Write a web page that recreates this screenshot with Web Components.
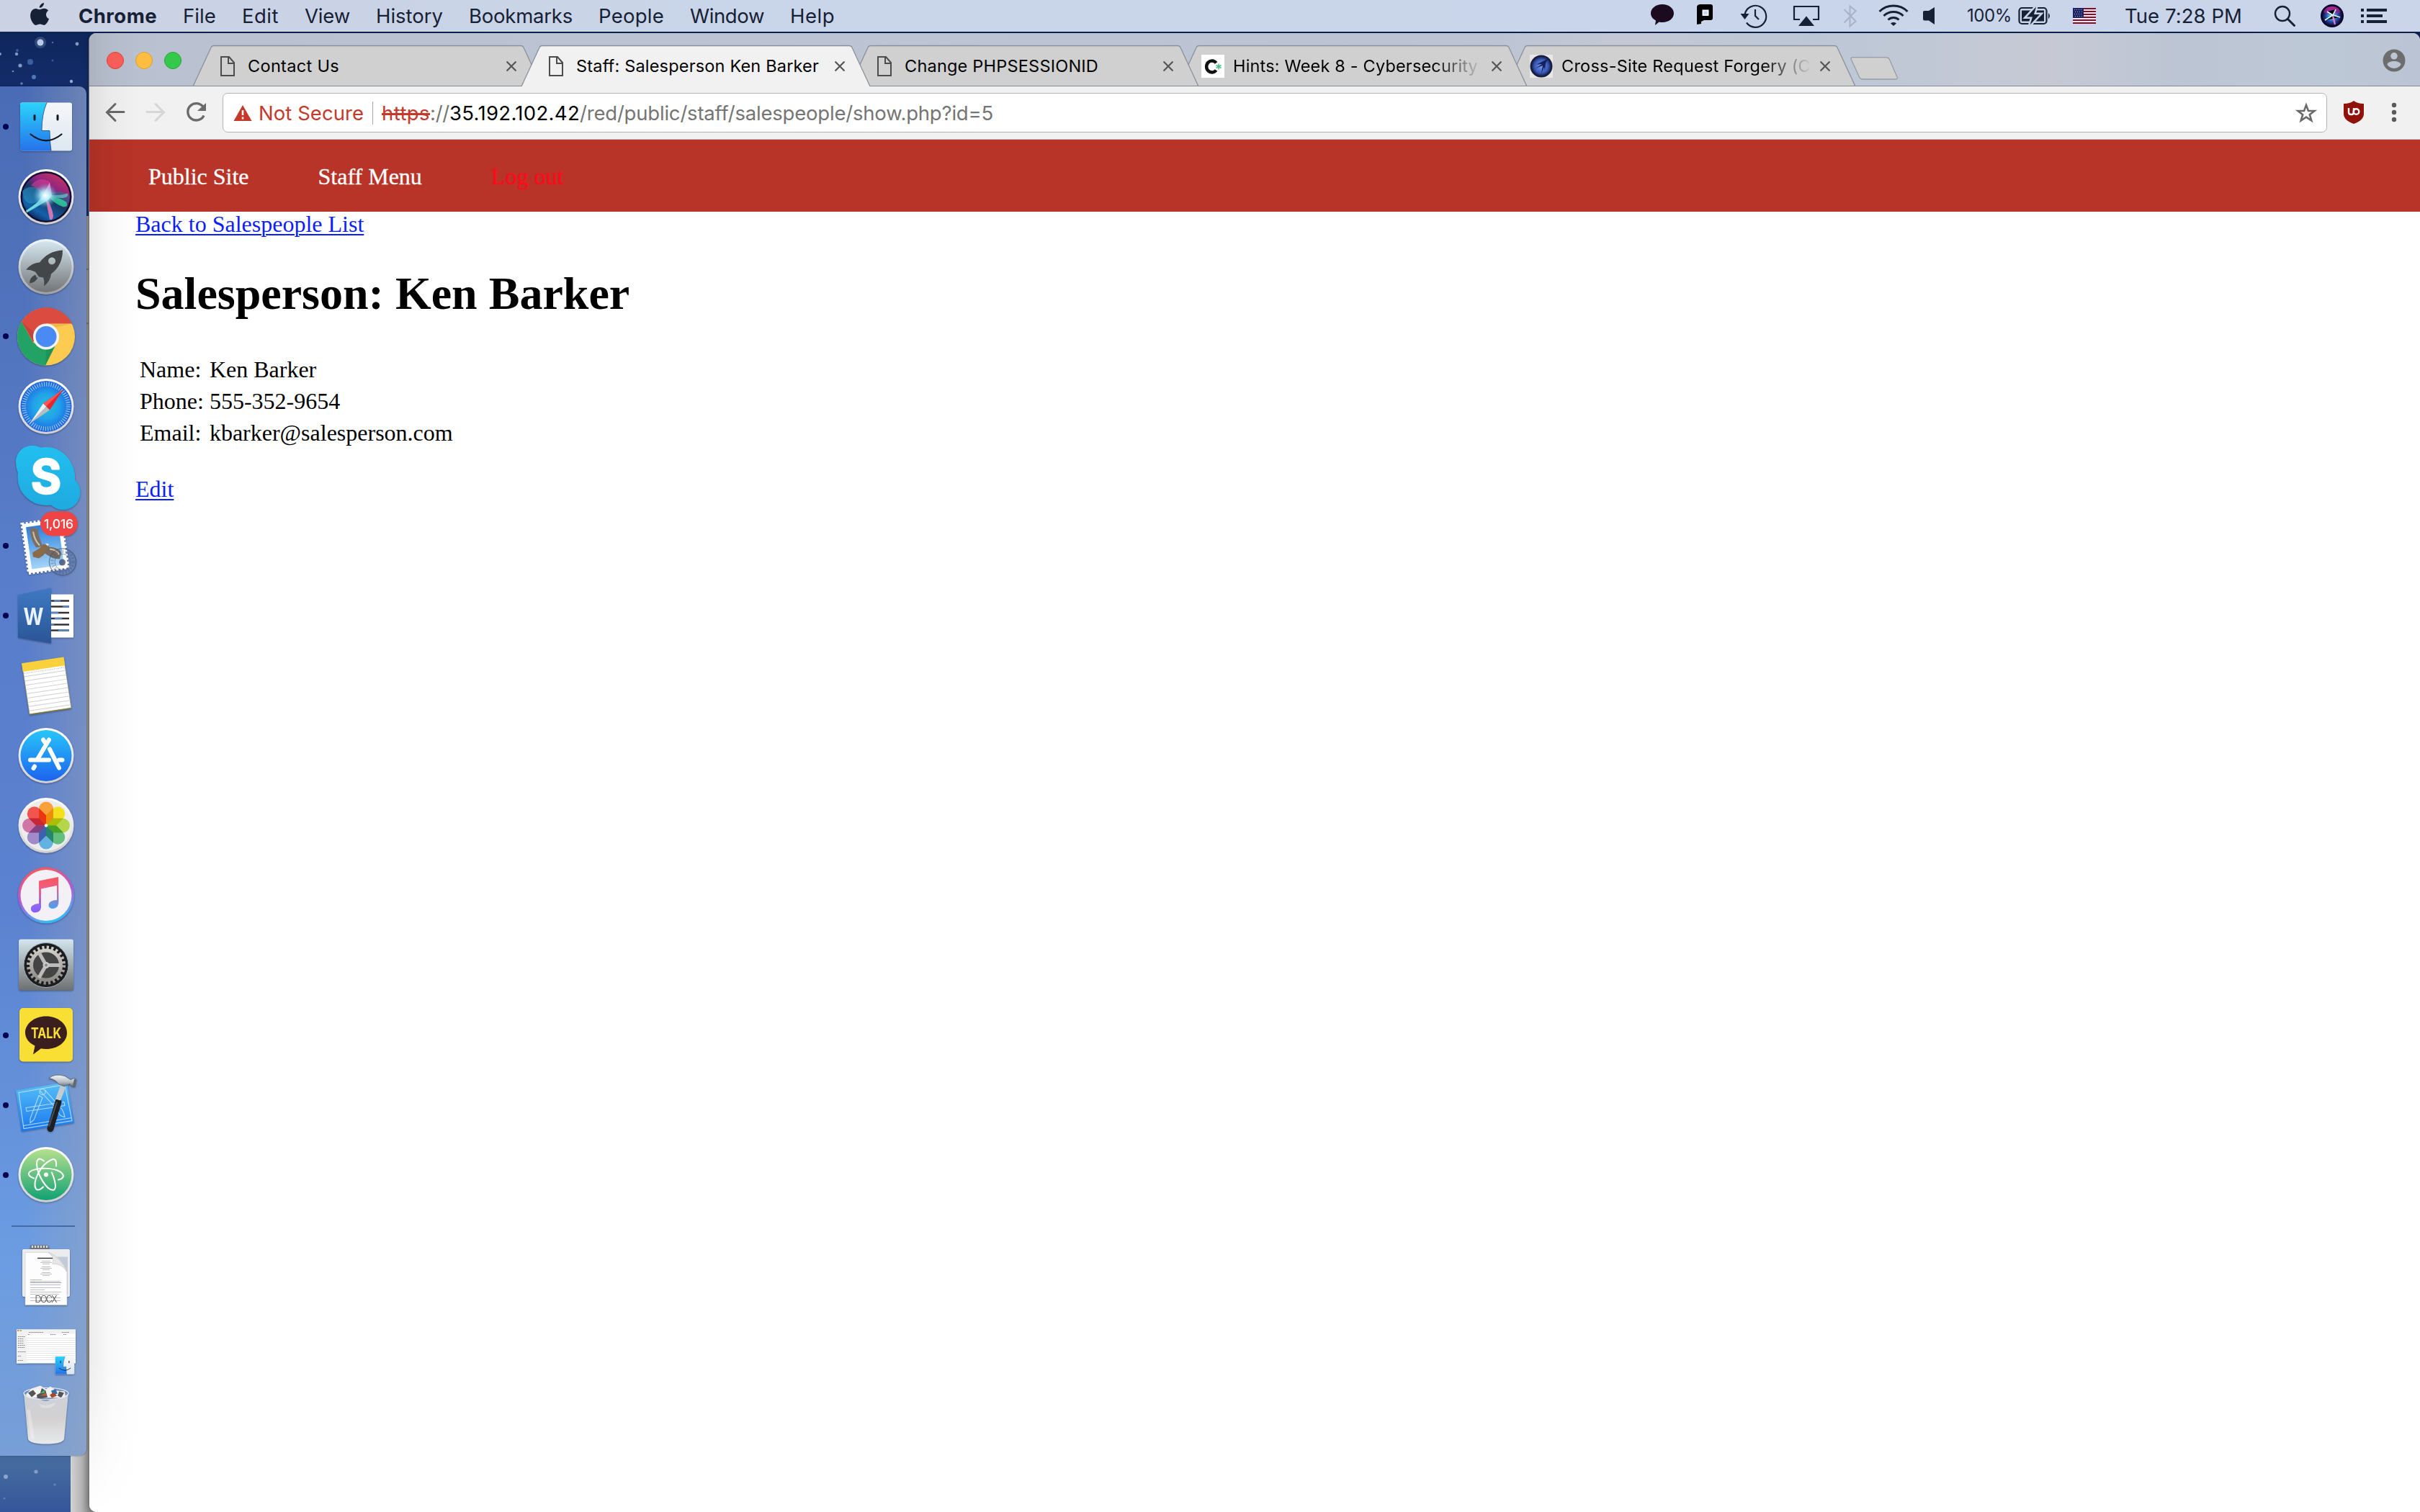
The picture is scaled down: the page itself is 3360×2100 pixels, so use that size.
<!DOCTYPE html>
<html lang="en">
<head>
<meta charset="utf-8">
<title>Staff: Salesperson Ken Barker</title>
<style>
html,body{margin:0;padding:0;width:3360px;height:2100px;overflow:hidden;background:#0e2450}
</style>
</head>
<body>
<desktop-screen></desktop-screen>

<template id="t-desktop">
<style>
:host{display:block;position:relative;width:3360px;height:2100px;overflow:hidden;font-family:Inter,"Liberation Sans",sans-serif}
.wall,.behind,browser-window,mac-dock{position:absolute}
.wall{left:0;top:0}
.behind{left:98px;top:300px;width:200px;height:1800px;background:linear-gradient(90deg,#d2d2d2 0,#b8b8b8 14px,#8c8c8c 26px)}
.behind i{display:block;height:73px;border-bottom:2px solid #777}
browser-window{left:124px;top:46px}
mac-dock{left:0;top:120px}
mac-menubar{position:relative}
</style>
<svg class="wall" width="3360" height="2100" viewBox="0 0 3360 2100">
<defs><linearGradient id="sky" x2="0" y2="1"><stop offset="0" stop-color="#0b2150"/><stop offset=".05" stop-color="#132c69"/><stop offset=".9" stop-color="#36578f"/><stop offset=".97" stop-color="#456a9f"/><stop offset="1" stop-color="#35569a"/></linearGradient></defs>
<rect width="3360" height="2100" fill="url(#sky)"/>
<g fill="#b9cbe6"><circle cx="56" cy="59" r="8" opacity=".2"/><circle cx="56" cy="59" r="4.5"/><circle cx="107" cy="61" r="2.4" opacity=".7"/><circle cx="23" cy="75" r="2.2" opacity=".7"/><circle cx="28" cy="91" r="2.6" opacity=".7"/><circle cx="99" cy="113" r="2.2" opacity=".8"/><circle cx="0" cy="75" r="2" opacity=".7"/><circle cx="18" cy="99" r="1.3" opacity=".6"/><circle cx="30" cy="116" r="1.8" opacity=".5"/><circle cx="73" cy="59" r="1.3" opacity=".4"/></g>
<g fill="#5e8bd0"><circle cx="42" cy="86" r="4" opacity=".55"/><circle cx="47" cy="107" r="3" opacity=".8"/><circle cx="24" cy="70" r="2" opacity=".5"/><circle cx="73" cy="84" r="1.5" opacity=".5"/></g>
<g fill="#9db6d8"><circle cx="8" cy="2051" r="3" opacity=".8"/><circle cx="50" cy="2044" r="2.6" opacity=".7"/><circle cx="76" cy="2062" r="1.8" opacity=".4"/><circle cx="6" cy="2081" r="1.5" opacity=".4"/></g>
</svg>
<div class="behind"><i></i><i></i></div>
<browser-window></browser-window>
<mac-dock></mac-dock>
<mac-menubar></mac-menubar>
</template>

<template id="t-menubar">
<style>
:host{display:flex;justify-content:space-between;height:44px;width:3360px;background:linear-gradient(90deg,#cbd2e4,#c9d5e8 30%,#c9d5ea 70%,#cbd5ea);color:#172135;font-size:27.5px;line-height:44px}
nav,.st{display:flex;align-items:center}
nav{padding-left:41px;gap:36px}
nav b{font-weight:700}
nav svg{margin-right:4px}
.st{padding-right:46px}
svg{display:block;overflow:visible;flex:none}
</style>
<nav>
<svg width="28" height="44" viewBox="41 0 28 44"><path fill="#172135" d="M61 4c.3 3-2.700 7-6.200 6.800C54.500 8 57.700 4.400 61 4zM55 13.200c1.500 0 3.500-1.400 6.500-1.400 2.300.1 4.200 1 5.600 3-4.600 3-3.900 9.400.9 11.300-.9 3.300-3.900 8.700-6.700 8.800-2 0-3-1.300-5.800-1.300s-3.800 1.300-5.600 1.300c-3.300 0-7.800-7.200-7.800-13.200 0-6 3.500-9.700 7.500-9.800 2.300 0 3.900 1.300 5.400 1.300z"/></svg>
<b><fit-text w="109">Chrome</fit-text></b><fit-text w="46">File</fit-text><fit-text w="51">Edit</fit-text><fit-text w="63">View</fit-text><fit-text w="93">History</fit-text><fit-text w="144">Bookmarks</fit-text><fit-text w="91">People</fit-text><fit-text w="103">Window</fit-text><fit-text w="62">Help</fit-text>
</nav>
<div class="st">
<svg width="500" height="44" viewBox="2230 0 500 44">
<path fill="#1c0a1e" d="M2308 6c9 0 16 5.500 16 12.500S2317 31 2308 31c-1.600 0-3-.1-4.500-.5L2298 35l1-6.500c-4.300-2.200-7-5.800-7-10C2292 11.500 2299 6 2308 6z"/>
<path fill="#000" fill-rule="evenodd" d="M2361 6h14q3 0 3 3v16q0 3-3 3h-9l-4 2v3l-6 1V9q1-3 5-3zm3 8v7h8v-7z"/><path stroke="#f4f6fb" stroke-width="2" fill="#c9d5ea" d="M2364.500 14.500h7v6.500h-7z"/>
<g fill="none" stroke="#172135" stroke-width="2.200"><path d="M2422.500 20A15 15 0 1 1 2425 31.500"/><path d="M2437 13v9l5 5"/></g><path fill="#172135" d="M2416.500 19h12l-6 8z"/>
<path fill="none" stroke="#172135" stroke-width="2.200" d="M2499 27h-8V9h34v18h-8"/><path fill="#172135" d="M2508 22.500l11 13.500h-22z"/>
<path fill="none" stroke="#a9b4cc" stroke-width="2.200" d="M2560.500 13l16 16.500-8 7V8.500l8 6.500-16 16.500"/>
<g fill="none" stroke="#172135" stroke-width="3"><path d="M2609.500 16a28 28 0 0 1 39 0M2615.500 22a19.500 19.500 0 0 1 27 0M2621.500 27.500a11 11 0 0 1 15 0"/></g><path fill="#172135" d="M2625 32.500q4-2.800 8 0l-4 3.500z"/>
<path fill="#172135" d="M2672 15h6l8-5v24l-8-5.500h-6q-2 0-2-2V17q0-2 2-2z"/>
</svg>
<fit-text w="63" style="font-size:24px;text-indent:1px">100%</fit-text>
<svg width="157" height="44" viewBox="2793 0 157 44">
<rect x="2803.500" y="11" width="38" height="22" rx="4" fill="none" stroke="#172135" stroke-width="2.200"/><rect x="2807" y="14.500" width="31" height="15" fill="#172135"/>
<path fill="#172135" d="M2844 18q4 4 0 8.500z"/><path fill="#172135" stroke="#c9d5ea" stroke-width="5" paint-order="stroke" d="M2827 9.500l-13 14h8l-3.500 11 13.500-14.500h-8z"/>
<g><path fill="#f0eef2" d="M2878 11h32v22h-32z"/><path stroke="#8d0a26" stroke-width="2" d="M2878 12h32M2878 16h32M2878 20h32M2878 24h32M2878 28h32M2878 32h32"/><path fill="#1d2367" d="M2878 11h15v14h-15z"/><path stroke="#aab" stroke-width="1" stroke-dasharray="1 2" d="M2880 13.500h11M2881 16.500h10M2880 19.500h11M2881 22.500h10"/></g>
</svg>
<fit-text w="163">Tue 7:28 PM</fit-text>
<svg width="201" height="44" viewBox="3113 0 201 44">
<defs><radialGradient id="sir"><stop offset="0" stop-color="#eaffff"/><stop offset=".25" stop-color="#4ec3e0"/><stop offset=".6" stop-color="#2a4fb0"/><stop offset="1" stop-color="#100b3a"/></radialGradient><linearGradient id="sip" x2="0" y2="1"><stop offset="0" stop-color="#c31f9a"/><stop offset="1" stop-color="#c31f9a" stop-opacity=".2"/></linearGradient></defs>
<g fill="none" stroke="#172135" stroke-width="2.400"><circle cx="3169" cy="19" r="10"/><path d="M3176.500 26.500l9 9" stroke-width="3" stroke-linecap="round"/></g>
<circle cx="3238" cy="22" r="16" fill="#0a0828"/><circle cx="3238" cy="22" r="13.500" fill="url(#sir)"/><path fill="url(#sip)" d="M3226 17a13 13 0 0 1 24 0l-12 5z"/><path stroke="#d9fbff" stroke-width="1.600" d="M3228 28l11-7 10 3M3231 16l8 5 4-8"/><path stroke="#e77fd0" stroke-width="2.200" d="M3239 22l3 12"/>
<path fill="#172135" d="M3278 12h4v4h-4zm8 0h28v4h-28zM3278 20h4v4h-4zm8 0h22v4h-22zM3278 28h4v4h-4zm8 0h28v4h-28z"/>
</svg>
</div>
</template>

<template id="t-tab">
<style>
:host{display:grid;grid-template:57px/484px;width:484px;height:57px;margin-left:-28px;flex:none;--bg:#d0d0d0}
:host([active]){--bg:#f1f1f1}
.bg,.row{grid-area:1/1}
.bg{display:block;overflow:visible}
.line{display:inline}
:host([active]) .line{display:none}
.row{display:grid;grid-template-columns:32px 349px 14px;column-gap:12px;padding-left:32px;align-items:center;box-sizing:border-box;height:57px}
.ic{display:flex;justify-content:center;padding-top:1px}
.tx{overflow:hidden;white-space:nowrap;font-size:23.500px;line-height:30px;color:#000}
:host([fade]) .tx{-webkit-mask-image:linear-gradient(90deg,#000 calc(100% - 72px),transparent calc(100% - 2px));mask-image:linear-gradient(90deg,#000 calc(100% - 72px),transparent calc(100% - 2px))}
.x{margin-left:-2px}
svg{display:block}
</style>
<svg class="bg" width="484" height="57" viewBox="0 0 484 57"><path fill="var(--bg)" d="M0 57L25 3Q26 .5 29 .5H455Q458 .5 459 3L484 57z"/><path fill="none" stroke="#8b919b" stroke-width="1.300" d="M0 57L25 3Q26 .5 29 .5H455Q458 .5 459 3L484 57"/><path class="line" stroke="#858b96" d="M0 56.500H484"/></svg>
<div class="row"><div class="ic"><slot name="icon"><svg width="20" height="28" viewBox="0 0 20 28"><path fill="none" stroke="#4c4c4c" stroke-width="2" d="M1 1h11l7 8v18H1zM11 1v9h8"/></svg></slot></div><div class="tx"><slot></slot></div>
<svg class="x" width="14" height="14" viewBox="0 0 14 14"><path stroke="#555" stroke-width="2.200" d="M.5.5l13 13m0-13l-13 13"/></svg></div>
</template>

<template id="t-window">
<style>
:host{display:flex;flex-direction:column;width:3236px;height:2054px;box-sizing:border-box;background:#fff;border-radius:10px 10px 0 10px;overflow:hidden;box-shadow:-1px 0 0 #6f7075,0 0 10px rgba(0,0,0,.35)}
.strip{display:flex;height:73px;border-bottom:1px solid #858b96;background:linear-gradient(90deg,#b9c0cf,#bdc4d3 35%,#bcc4d4 60%,#c4c8d4 66%,#bcc7d6 74%,#c6c9d4 84%,#bcc5d4 90%,#bdc8d6 96%,#bbc4d4);justify-content:space-between}
.left{display:flex}
.lights{display:flex;gap:16px;padding:26px 0 0 24px;width:148px}
.lights i{width:22px;height:22px;border-radius:50%;border:1px solid #e0443e;background:#fc605b}
.lights i:nth-child(2){background:#fdbd41;border-color:#dfa02f}
.lights i:nth-child(3){background:#34c94a;border-color:#24a837}
.tabs{display:flex;padding-top:17px;isolation:isolate}
.tabs chrome-tab{position:relative}
.plus{margin:33px 0 0 -7px}
.prof{margin:22px 20px 0 0}
svg{display:block;flex:none}
.bar{display:flex;height:73px;border-bottom:1px solid #c4bfc2;background:#f1f1f1;align-items:flex-start}
.nav{margin:18px 0 0 18px}
.omni{display:flex;width:2920px;height:53px;margin:9px 0 0 20px;border:1px solid #b3b3b3;border-radius:7px;background:#fff;align-items:center;font-size:27.500px;line-height:54px;color:#757575;white-space:nowrap}
.omni .ns{color:#c5392d;margin-left:9px}
.omni .dv{width:1px;height:32px;background:#a9a9a9;margin:0 12px 0 12px}
.omni .https{color:#c5392d;text-decoration:line-through;text-decoration-thickness:3px}
.omni b{font-weight:400;color:#000}
.omni .star{margin-left:auto;margin-right:13px}
.shade{position:absolute;left:0;top:0;width:80px;height:2054px;background:linear-gradient(90deg,rgba(0,0,0,.07),rgba(0,0,0,.025) 30px,rgba(0,0,0,0) 70px);-webkit-mask-image:linear-gradient(#000 90%,transparent);mask-image:linear-gradient(#000 90%,transparent)}
</style>
<div class="strip">
<div class="left">
<div class="lights"><i></i><i></i><i></i></div>
<div class="tabs">
<chrome-tab style="z-index:4"><fit-text w="127">Contact Us</fit-text></chrome-tab>
<chrome-tab active style="z-index:9"><fit-text w="337">Staff: Salesperson Ken Barker</fit-text></chrome-tab>
<chrome-tab style="z-index:3"><fit-text w="269">Change PHPSESSIONID</fit-text></chrome-tab>
<chrome-tab fade style="z-index:2"><svg slot="icon" width="32" height="32" viewBox="0 0 32 32"><path fill="#fff" d="M0 0h32v32H0z"/><path fill="none" stroke="#111" stroke-width="4.500" d="M20.500 11.500a7.500 8 0 1 0 0 10"/><path stroke="#4cc08c" stroke-width="1.600" d="M24 12.500v8M20.500 14.500l7 4M27.500 14.500l-7 4"/></svg><fit-text w="340">Hints: Week 8 - Cybersecurity</fit-text></chrome-tab>
<chrome-tab fade style="z-index:1"><svg slot="icon" width="32" height="32" viewBox="0 0 32 32"><defs><radialGradient id="ow"><stop offset="0" stop-color="#7d9bea"/><stop offset=".7" stop-color="#3555b4"/><stop offset="1" stop-color="#10183c"/></radialGradient></defs><path fill="#e8e8e8" d="M0 0h32v32H0z"/><circle cx="16" cy="16" r="15.500" fill="#1a2038"/><circle cx="16" cy="16" r="14" fill="url(#ow)"/><path fill="#13225f" d="M25 6L9 13.500l8-.5-9 6 10-4-2 11 4-9 1 5 1-10z"/></svg><fit-text w="346">Cross-Site Request Forgery (C</fit-text></chrome-tab>
</div>
<svg class="plus" width="66" height="32" viewBox="0 0 66 32"><path fill="#d0d0d0" stroke="#989ca4" stroke-width="1.300" d="M3 .7H50q3 0 4.500 3L65 28q1 3-2 3H17q-3 0-4.500-3L1.200 3.500Q.5.700 3 .7z"/></svg>
</div>
<svg class="prof" width="32" height="32" viewBox="0 0 32 32"><path fill="#6d6d6d" fill-rule="evenodd" d="M16 .5a15.500 15.500 0 1 1 0 31a15.500 15.500 0 0 1 0-31zm0 4.500a4.800 4.800 0 1 0 0 9.600a4.800 4.800 0 0 0 0-9.600zm0 12c-4.500 0-9.500 1.800-9.500 4.700 2 3.300 5.700 5.200 9.500 5.200s7.500-1.900 9.500-5.200c0-2.900-5-4.700-9.500-4.700z"/></svg>
</div>
<div class="bar">
<svg class="nav" width="147" height="36" viewBox="142 138 147 36"><g fill="none" stroke-width="3"><path stroke="#6a6a6a" stroke-linecap="round" d="M160 144.500L148.500 156l11.500 11.500M149 155.500h23"/><path stroke="#d6d6d6" stroke-linecap="round" d="M216 144.500l11.500 11.500-11.500 11.500M227 155.500h-23"/><path stroke="#6a6a6a" stroke-width="3.400" d="M282 148.500a11.700 11.700 0 1 0 1 12"/></g><path fill="#6a6a6a" d="M286 143v11h-12z"/></svg>
<div class="omni">
<svg width="26" height="24" viewBox="0 0 26 24" style="margin-left:14px"><path fill="#c5392d" d="M13 1l12.500 22H.5z"/><path stroke="#fff" stroke-width="2.600" d="M13 8v7M13 17.500v3"/></svg>
<span class="ns"><fit-text w="146">Not Secure</fit-text></span><span class="dv"></span>
<fit-text class="https" w="67">https</fit-text><fit-text w="27">://</fit-text><b><fit-text w="181">35.192.102.42</fit-text></b><fit-text w="574">/red/public/staff/salespeople/show.php?id=5</fit-text>
<svg class="star" width="30" height="30" viewBox="0 0 30 30"><path fill="none" stroke="#6a6a6a" stroke-width="2.600" d="M15 4l3 8h8.500l-6.700 5.200 2.500 8.300L15 20.600 7.700 25.500l2.500-8.300L3.500 12H12z"/></svg>
</div>
<svg style="margin:18px 0 0 22px" width="84" height="36" viewBox="3253 138 84 36"><path fill="#8f130b" d="M3268 140q5 4 14 4v14q0 9-14 14q-14-5-14-14v-14q9 0 14-4z"/><g fill="none" stroke="#fff" stroke-width="2.400"><path d="M3261 150v6q0 3 3.500 3t3.500-3v-6"/><circle cx="3271.500" cy="155" r="3.800"/></g><g fill="#5a5a5a"><circle cx="3324" cy="146" r="3.200"/><circle cx="3324" cy="156" r="3.200"/><circle cx="3324" cy="166" r="3.200"/></g></svg>
</div>
<staff-page></staff-page>
<div class="shade"></div>
</template>

<template id="t-page">
<style>
:host{display:block;flex:1;background:#fff;font-family:"Liberation Serif","Times New Roman",serif;font-size:32px;line-height:36px;color:#000}
nav{display:flex;height:100px;background:#b83328;color:#fff;gap:96px;padding:1px 0 0 82px;align-items:center;box-sizing:border-box;-webkit-text-stroke:.3px}
nav .out{color:#ff0a1a}
main{padding-left:64px;margin-top:-1px}
a{display:table;color:#0a1eff;text-decoration:underline;text-decoration-thickness:2px;text-underline-offset:3px;text-decoration-skip-ink:auto}
h1{font-size:64px;line-height:74px;margin:42px 0 44px}
table{border-spacing:4px;margin-bottom:36px}
td{padding:2px}
</style>
<nav><span>Public Site</span><span>Staff Menu</span><span class="out">Log out</span></nav>
<main><a>Back to Salespeople List</a><h1>Salesperson: Ken Barker</h1>
<table><tr><td>Name:</td><td>Ken Barker</td></tr><tr><td>Phone:</td><td>555-352-9654</td></tr><tr><td>Email:</td><td>kbarker@salesperson.com</td></tr></table>
<a>Edit</a></main>
</template>

<template id="t-dockitem">
<style>
:host{display:grid;grid-template-columns:12px 108px;height:97.070px;align-items:center;flex:none}
i{width:8px;height:8px;border-radius:50%;margin-left:4px;visibility:hidden;background:#02024f}
:host([running]) i{visibility:visible}
</style><i></i><slot></slot>
</template>

<template id="t-dock">
<style>
:host{display:flex;flex-direction:column;width:120px;height:1902px;box-sizing:border-box;padding-top:7.500px;border-radius:0 10px 10px 0;background:linear-gradient(90deg,rgba(160,160,170,0) 30%,rgba(165,168,180,.38)),linear-gradient(#4a6cb6,#4f71ba 12%,#587dca 35%,#5b82d0 60%,#6b9ce2 85%,#779ed6);box-shadow:0 0 2px rgba(0,0,0,.5)}
.sep{height:2px;margin:21.500px 16px 18.500px;width:88px;background:#456ba6;flex:none}
svg{display:block;overflow:visible}
svg.big{filter:drop-shadow(0 1px 1px rgba(0,0,0,.35))}
text{font-family:Inter,"Liberation Sans",sans-serif}
</style>
<svg width="0" height="0" style="position:absolute"><defs>
<linearGradient id="fb" x2="0" y2="1"><stop offset="0" stop-color="#2ad3fb"/><stop offset="1" stop-color="#2673ec"/></linearGradient>
<linearGradient id="fw" x2="0" y2="1"><stop offset="0" stop-color="#f6f6f8"/><stop offset="1" stop-color="#dbe7f2"/></linearGradient>
<linearGradient id="lp" x2="0" y2="1"><stop offset="0" stop-color="#d5e6ef"/><stop offset="1" stop-color="#737577"/></linearGradient>
<linearGradient id="rim" x2="0" y2="1"><stop offset="0" stop-color="#fff"/><stop offset="1" stop-color="#cfcfd1"/></linearGradient>
<linearGradient id="lrim" x2="0" y2="1"><stop offset="0" stop-color="#eef8ff"/><stop offset="1" stop-color="#a0a1a4"/></linearGradient>
<radialGradient id="sf"><stop offset="0" stop-color="#22c0d8"/><stop offset=".5" stop-color="#22a2ea"/><stop offset="1" stop-color="#1c63e0"/></radialGradient>
<linearGradient id="sk" x2="0" y2="1"><stop offset="0" stop-color="#22bff0"/><stop offset="1" stop-color="#1fa9df"/></linearGradient>
<linearGradient id="ml" x2="0" y2="1"><stop offset="0" stop-color="#2a7fdc"/><stop offset="1" stop-color="#a5d4f8"/></linearGradient>
<linearGradient id="wd" x2="0" y2="1"><stop offset="0" stop-color="#3f79c2"/><stop offset="1" stop-color="#2a5596"/></linearGradient>
<linearGradient id="as" x2="0" y2="1"><stop offset="0" stop-color="#27c5fa"/><stop offset="1" stop-color="#1c63ee"/></linearGradient>
<linearGradient id="itr" x1=".3" x2=".6" y2="1"><stop offset="0" stop-color="#fb5a55"/><stop offset=".5" stop-color="#b458dd"/><stop offset="1" stop-color="#2fc0fc"/></linearGradient>
<linearGradient id="note" gradientUnits="userSpaceOnUse" x1="0" x2="0" y1="-25" y2="24"><stop offset="0" stop-color="#fb5560"/><stop offset=".35" stop-color="#ee5f85"/><stop offset=".8" stop-color="#8d68fa"/><stop offset="1" stop-color="#8a5bfd"/></linearGradient>
<linearGradient id="n2" gradientUnits="userSpaceOnUse" x1="0" x2="0" y1="-25" y2="20"><stop offset="0" stop-color="#f9555c"/><stop offset=".35" stop-color="#e0608f"/><stop offset="1" stop-color="#3ba6f8"/></linearGradient>
<linearGradient id="pf" x2="0" y2="1"><stop offset="0" stop-color="#d4e6ee"/><stop offset="1" stop-color="#6e7072"/></linearGradient>
<linearGradient id="met" x2="0" y2="1"><stop offset="0" stop-color="#cfcdca"/><stop offset="1" stop-color="#8d8b88"/></linearGradient>
<linearGradient id="xc" x2="0" y2="1"><stop offset="0" stop-color="#57c0fa"/><stop offset="1" stop-color="#1a77ee"/></linearGradient>
<linearGradient id="hm" x2="0" y2="1"><stop offset="0" stop-color="#f4f6f8"/><stop offset=".6" stop-color="#b4bcc3"/><stop offset="1" stop-color="#5c666e"/></linearGradient>
<linearGradient id="at" x2="0" y2="1"><stop offset="0" stop-color="#b5e08d"/><stop offset="1" stop-color="#12a173"/></linearGradient>
<linearGradient id="tr" x2="0" y2="1"><stop offset="0" stop-color="#d3d6db"/><stop offset=".5" stop-color="#d9d5d4"/><stop offset="1" stop-color="#f0f0f0"/></linearGradient>
<radialGradient id="glow"><stop offset="0" stop-color="#fff"/><stop offset=".4" stop-color="#bff4ff" stop-opacity=".8"/><stop offset="1" stop-color="#6ad" stop-opacity="0"/></radialGradient>
<linearGradient id="sr" x1=".8" x2=".2" y2="1"><stop offset="0" stop-color="#c83461"/><stop offset=".3" stop-color="#8e2580"/><stop offset=".5" stop-color="#163763"/><stop offset=".8" stop-color="#1461a8"/><stop offset="1" stop-color="#0b1746"/></linearGradient>
<g id="finder"><rect x="-36" y="-34" width="72" height="67" rx="3" fill="url(#fw)"/><path fill="url(#fb)" d="M-33-34H1Q-6-18-6 5H5Q5 20 7 33H-33q-3 0-3-3V-31q0-3 3-3z"/><path fill="none" stroke="#16395f" stroke-width="1" opacity=".7" d="M1-34Q-6-18-6 5H5Q5 20 7 33"/><g fill="none" stroke="#0d1824" stroke-linecap="round"><path stroke-width="3" d="M-16-16v5.500M16-16v5.500"/><path stroke-width="2.200" d="M-21.500 10Q0 27.500 21.500 10"/></g></g>
</defs></svg>

<dock-item running><svg class="big" width="108" height="97" viewBox="-52 -48.500 108 97"><use href="#finder"/></svg></dock-item>

<dock-item><svg class="big" width="108" height="97" viewBox="-52 -48.500 108 97"><circle r="38.500" fill="url(#rim)"/><circle r="35.500" fill="#120d35"/><circle r="33" fill="url(#sr)"/><path fill="#e0409a" opacity=".55" d="M-21-16Q-10-30 5-21L8-4-4 0Q-10-12-21-16z"/><path fill="#2ea8d8" opacity=".45" d="M-33-8Q-18-22 0-3L-14 8Q-26 12-31 2z"/><path fill="#0c8c9c" opacity=".4" d="M0-4Q20-12 32-2q2 14-10 12z"/><path fill="#2fd5a0" opacity=".8" d="M3-1Q18 0 28 7q4 7-4 7Q12 10 3-1z"/><path fill="#6adfd0" opacity=".6" d="M2-3Q18-1 30-5q2 4-4 6Q14 3 2-3z"/><path fill="#f27ab8" opacity=".85" d="M-1 0Q8 12 10 26q-1 8-5 5Q2 16-1 0z"/><path fill="#eab5e6" opacity=".7" d="M-5-2L5-20 8-2 3 4z"/><path fill="#7df0f0" d="M-28 19l1 3L2 5Q8 0 4-4L-4-3Q-10 8-28 19z" opacity=".85"/><circle r="17" cx="-1" cy="-2" fill="url(#glow)"/></svg></dock-item>

<dock-item><svg class="big" width="108" height="97" viewBox="-52 -48.500 108 97"><circle r="38.500" fill="url(#lrim)"/><circle r="35.500" fill="url(#lp)"/><path fill="#43474a" fill-rule="evenodd" d="M23-23Q23-2 7 10Q6 20-3 27q1-8-1-12l-6-1-5-7q-6-3-13-3Q-19-6-9-6Q3-22 23-23zM8-13a5 5 0 1 0 .1 0z"/><path fill="#43474a" d="M-15 11q2 2 1 4 3 0 3-1Q-14 22-23 23q0-8 8-12z"/></svg></dock-item>

<dock-item running><svg class="big" width="108" height="97" viewBox="-52 -48.500 108 97"><circle r="40" fill="#fdcb50"/><path fill="#23a265" d="M-1 40A40 40 0 0 1-34-21L-18 8 0 18 14 10z"/><path fill="#198a50" opacity=".6" d="M-1 40L14 10 0 18z"/><path fill="#dc4b40" d="M-34-21A40 40 0 0 1 36-18H0L-18 8z"/><path fill="#b93c33" opacity=".6" d="M-34-21L-16-5-18 6z"/><path fill="#e0a53c" opacity=".5" d="M0-18h36L14-13z"/><circle r="18" fill="#f4f4f4"/><circle r="14.500" fill="#4a8af4"/></svg></dock-item>

<dock-item><svg class="big" width="108" height="97" viewBox="-52 -48.500 108 97"><circle r="38.500" fill="url(#rim)"/><circle r="35.500" fill="url(#sf)"/><circle r="31" fill="none" stroke="#cfe6fa" stroke-width="6" stroke-dasharray="1 2.247" opacity=".8"/><path fill="#e8242c" d="M24-24L5 5-4-4z"/><path fill="#f55" d="M24-24L-4-4l4 4z"/><path fill="#f1f1f1" d="M-23 24L-4-4l4.500 4.500z"/><path fill="#b9bcbf" d="M-23 24L0 0l5 5z"/></svg></dock-item>

<dock-item><svg class="big" width="108" height="97" viewBox="-52 -48.500 108 97"><path fill="url(#sk)" d="M-42-21A23 23 0 0 1-8-40Q20-44 34-20Q41-8 40 5A23 23 0 0 1 7 40Q-18 43-33 23Q-41 11-39-5Q-42-12-42-21z"/><text x="0" y="23" font-size="64" font-weight="700" fill="#fff" stroke="#fff" stroke-width="2.500" stroke-linejoin="round" text-anchor="middle">S</text></svg></dock-item>

<dock-item running><svg class="big" width="108" height="97" viewBox="-52 -48.500 108 97"><g transform="rotate(-8 0 0)"><path fill="#fdfdfd" stroke="#fdfdfd" stroke-width="4" stroke-dasharray="3 2.500" d="M-29-35H26V34H-29z"/><path fill="url(#ml)" d="M-24-30H21V29H-24z"/></g><path fill="#8a6a47" d="M-9 3L-4-3 2-1 5 2 0 8-4 13-10 17-18 15-19 9z"/><path fill="#7b6f65" d="M-23-26q1-1 3 2l1-3 2 3 2-3 1 4 3-2q-1 7 3 16l3 9-9 2q-8-12-9-28z"/><path fill="#756a5f" d="M3 1q16 1 18 9l-2 8Q8 18-3 9z"/><path fill="none" stroke="#d3c3ab" stroke-width="2" d="M-18-20Q-16-8-9-1M5 4q10 1 13 8"/><path fill="#efe7d8" d="M-1-4l5 1-2 3z"/><g fill="none" stroke="#42506e" opacity=".55"><circle cx="23" cy="22" r="18.500" stroke-width="1.500"/><circle cx="23" cy="22" r="11" stroke-width="1"/><circle cx="23" cy="22" r="14.500" stroke-width="4" stroke-dasharray="2.200 2" opacity=".6"/></g><circle cx="22.500" cy="22.500" r="4.500" fill="#42506e" opacity=".8"/><rect x="-8" y="-48" width="52" height="34" rx="17" fill="#f04444"/><text x="17.500" y="-24.800" font-size="17.500" font-weight="500" fill="#fff" text-anchor="middle" textLength="41">1,016</text></svg></dock-item>

<dock-item running><svg class="big" width="108" height="97" viewBox="-52 -48.500 108 97"><path fill="#fff" d="M0-30h38V30H0z"/><g stroke-width="2.600"><path stroke="#333" d="M7-21h25M7-13h25M7-4.500h25M7 3.500h25M7 12h25M7 20h25"/><path stroke="#5a86c4" d="M11-21h9M23-13h9M7-4.500h10M12 3.500h10M7 12h4M17 20h15"/></g><path fill="url(#wd)" d="M-39-29L7-39V38L-39 30z"/><text x="-17.500" y="12" font-size="33" font-weight="700" fill="#eaf2fc" text-anchor="middle" textLength="28" lengthAdjust="spacingAndGlyphs">W</text></svg></dock-item>

<dock-item><svg class="big" width="108" height="97" viewBox="-52 -48.500 108 97"><g transform="rotate(-8.500)"><path fill="#fff" stroke="#a59c6a" stroke-width=".7" d="M-28.500-35H30V35.500H-28.500z"/><path fill="#fad03c" d="M-29-36H30V-24H-29z"/><path stroke="#999" stroke-dasharray="1 1.500" stroke-width=".8" d="M-28-21.500H30"/><path stroke="#cfcfcf" d="M-28-17H30M-28-11H30M-28-5H30M-28 1H30M-28 7H30M-28 13H30M-28 19H30M-28 25H30M-28 31H30"/><path stroke="#8d7d2c" stroke-width="1.200" d="M-28.500 36H30"/></g></svg></dock-item>

<dock-item><svg class="big" width="108" height="97" viewBox="-52 -48.500 108 97"><circle r="38.500" fill="url(#rim)"/><circle r="35.500" fill="url(#as)"/><g stroke="#fff" stroke-width="6" stroke-linecap="round" fill="none"><path d="M-22 6H4M18 6h4.500M4-22L-12 5M-16 15l-1.500 2.500M-4-22l2 3M5-9L18 17"/></g></svg></dock-item>

<dock-item><svg class="big" width="108" height="97" viewBox="-52 -48.500 108 97"><circle r="38.500" fill="url(#rim)"/><circle r="35.500" fill="#ececec"/><g style="isolation:isolate" id="petals"></g><circle r="2.300" fill="#fff"/></svg></dock-item>

<dock-item><svg class="big" width="108" height="97" viewBox="-52 -48.500 108 97"><circle r="39" fill="url(#itr)"/><circle r="35.500" fill="#f4f1f6"/><path fill="url(#note)" d="M-10-20L17-25.500V-14L-7-9V17Q-8 24-16 24Q-22 23-21 17Q-19 12-10 11.500z"/><path fill="url(#n2)" d="M17-25.500l.5 33Q18 17 10 18.500Q3 18.500 3.500 12.500Q5 7 15 6.500V-16z"/></svg></dock-item>

<dock-item><svg class="big" width="108" height="97" viewBox="-52 -48.500 108 97"><rect x="-38" y="-36" width="76" height="71" rx="3" fill="url(#pf)"/><circle r="31" fill="#1d1d1e" stroke="#9cb2bf" stroke-width="1"/><circle r="24.500" fill="none" stroke="url(#met)" stroke-width="5" stroke-dasharray="3.200 3.214"/><circle r="20.500" fill="#444" stroke="url(#met)" stroke-width="5"/><g stroke="#bdbbb8" stroke-width="5"><path d="M0 0H20M0 0L-10-17.500M0 0L-10 17.500"/></g><circle r="4.500" fill="#c9c8c6"/><circle r="2" fill="#7f8c95"/></svg></dock-item>

<dock-item running><svg class="big" width="108" height="97" viewBox="-52 -48.500 108 97"><rect x="-37" y="-37.500" width="74" height="74.500" rx="5" fill="#f9df33"/><path fill="#3b1e1e" d="M0-26c16 0 29 10 29 23S16 19.500 0 19.500q-4 0-7-.7L-18 27l2.500-12C-24 11-29 4-29-3-29-16-16-26 0-26z"/><text x="0" y="4.500" font-size="20" font-weight="700" fill="#f9e033" text-anchor="middle" textLength="42" lengthAdjust="spacingAndGlyphs">TALK</text></svg></dock-item>

<dock-item running><svg class="big" width="108" height="97" viewBox="-52 -48.500 108 97"><path fill="url(#xc)" d="M-42-20L29-32 39 25-34 37z"/><g fill="none" stroke="#c8e9ff" stroke-width="1.100" opacity=".85"><path d="M-38-17L26-28 36 22-31 33zM-32 29L35 18M-28 4L25-4 26 1-27 9zM-10-13L-22 19-22 25-17 21-5-10zM-8-19L17 8M-2-21L22 6M17 8q0 8 9 9-1-6-4-11"/><circle cx="-5" cy="-18" r="4"/></g><path fill="none" stroke="#1d1f22" stroke-width="9" stroke-linecap="round" d="M17-4L6 33"/><path stroke="#4d5156" stroke-width="2" d="M15-4L4 30"/><path fill="#c5cbd0" d="M13-8l7 2L27-24 20-27z"/><path fill="url(#hm)" stroke="#56616a" stroke-width=".8" d="M4-37Q12-44 26-40L34-35 39-37 42-35 40-25 35-26 33-29 26-26 18-28Q14-35 4-37z"/><path fill="#5f6870" d="M39-36l3 1-2 10-3-1z"/></svg></dock-item>

<dock-item running><svg class="big" width="108" height="97" viewBox="-52 -48.500 108 97"><circle r="38.500" fill="url(#rim)"/><circle r="35.500" fill="url(#at)"/><g fill="none" stroke="#fff" stroke-width="2" stroke-linecap="round"><path d="M-17 5Q-25 2-24-2C-21-11 22-12 24 2Q23 6 17 7"/><path d="M-3-19Q-12-26-13-16C-13 0 2 24 11 21Q16 17 8-3"/><path d="M14-12Q15-25 6-20C-7-14-20 10-14 20Q-10 23-4 17"/></g><circle r="3" fill="#fff"/></svg></dock-item>

<div class="sep"></div>

<dock-item><svg class="big" width="108" height="97" viewBox="-52 -48.500 108 97"><path fill="#777" d="M-22-42H2l3 5h-27z"/><path stroke="#ddd" stroke-dasharray="2 2" stroke-width="3" d="M-20-40H4"/><rect x="-33" y="-36.500" width="66" height="66" rx="2" fill="#ececee"/><path fill="#c3cad8" d="M8-26h22v52H8z"/><path fill="#fdfdfd" stroke="#c9c9c9" stroke-width=".6" d="M-29-32H5Q22-24 29-5V41H-29z"/><path fill="#e6e6e6" stroke="#bbb" stroke-width=".5" d="M3-32Q12-27 9-16Q22-17 29-5Q22-24 3-32z"/><g stroke="#999" stroke-width=".6"><path stroke="#222" stroke-width="1.300" d="M-12-24H9"/><path d="M-6-20H6M-8-18H8M-5-16H5M-6-12H6M-8-10H8M-5-8H5M-6-4H6M-8-2H8M-5 0H5M-22 6H-6M-22 8H20M-22 17H20M-22 20H-2M-22 23H21M-22 26H18M-22 31H20M-22 35H20"/><path stroke="#88d" d="M-22 13H20"/><path stroke="#555" d="M-22 10H21"/></g><text x="0" y="37" font-size="12.500" font-weight="300" fill="#444" text-anchor="middle" textLength="31">DOCX</text></svg></dock-item>

<dock-item><svg class="big" width="108" height="97" viewBox="-52 -48.500 108 97"><g transform="translate(0 -1)"><path fill="#fff" d="M-41-21H41V26H-41z"/><path fill="#f1f1f1" d="M-41-21H41v6H-41zM-41-15h14V26h-14z"/><g fill="#e44"><circle cx="-39" cy="-19.500" r=".9"/><circle cx="-37" cy="-19.500" r=".9" fill="#eb3"/><circle cx="-35" cy="-19.500" r=".9" fill="#4b4"/></g><path stroke="#ddd" stroke-width=".7" d="M-27-9H41M-27-6H41M-27-3H41M-27 0H41M-27 3H41M-27 6H41M-27 9H41M-27 12H41M-27 15H41M-27 18H41M-27 21H41"/><path stroke="#777" stroke-dasharray="1 .6" d="M-39-11H-29M-39-8H-31M-39-5H-31M-39-2H-31M-39 1H-29M-39 4H-30M-39 10H-28M-39 16H-35M-39 22H-32M-25-14H-22M6-14H14M24-14H28M-24-17H-4M22-17H32"/><g transform="translate(26 29) scale(.37)"><use href="#finder"/></g></g></svg></dock-item>

<dock-item><svg class="big" width="108" height="97" viewBox="-52 -48.500 108 97"><path fill="#f3f3f3" d="M-28-29L-20-37-8-41 0-36 6-40 14-34 26-33 27-24-26-24z"/><path fill="#555" d="M-25-31l7-4 4 5-6 5zM-6-38l6 5-8 2zM18-33l7 2-4 7-5-3zM-13-28l12-7 3 10-14 3z"/><path fill="#2c70b8" d="M7-34l6-2 3 6-7 2z"/><path fill="#a8492c" d="M5-28l6-4 4 5-7 3z"/><path fill="#c8583a" d="M-8-27l7-4 2 4z"/><path fill="#3fba5a" d="M-9-30l7-5v4z"/><path fill="url(#tr)" opacity=".95" d="M-31-31Q-26-24-10-23Q0-17 6-22Q26-23 31-31L25 33Q23 40 0 40T-25 33z"/><path fill="#fff" opacity=".3" d="M-15-22Q-8-8 14-18Q10-8-6-10zM-27-8l6 40 5 1-6-40z"/><ellipse cy="-30" rx="31" ry="8" fill="none" stroke="#e8edf5" stroke-width="1.500" opacity=".8"/></svg></dock-item>
</template>

<script>
class TemplateElement extends HTMLElement {
  connectedCallback() {
    if (this.shadowRoot) return;
    const root = this.attachShadow({ mode: 'open' });
    root.appendChild(document.getElementById(this.constructor.source).content.cloneNode(true));
    this.ready(root);
  }
  ready() {}
}
const make = (tag, source, ready) => customElements.define(tag, class extends TemplateElement {
  static source = source;
  ready(root) { if (ready) ready(root); }
});

make('desktop-screen', 't-desktop');
make('mac-menubar', 't-menubar');
make('browser-window', 't-window');
make('chrome-tab', 't-tab');
make('staff-page', 't-page');
make('dock-item', 't-dockitem');

/* The Photos flower: eight translucent petals turned round the centre. */
make('mac-dock', 't-dock', root => {
  const colours = ['#f9a13a', '#f3e11f', '#b5d64a', '#62c07c', '#62b1e0', '#a08bc8', '#d077a6', '#f25550'];
  const ns = 'http://www.w3.org/2000/svg';
  colours.forEach((c, i) => {
    const p = document.createElementNS(ns, 'path');
    p.setAttribute('d', 'M-10-10V-23A10 10 0 0 1 10-23V-10L0 0z');
    p.setAttribute('fill', c);
    p.setAttribute('transform', `rotate(${i * 45})`);
    p.style.mixBlendMode = 'multiply';
    root.getElementById('petals').appendChild(p);
  });
});

/* Text run spread or tightened to an exact advance width. */
customElements.define('fit-text', class extends HTMLElement {
  connectedCallback() {
    if (!this.shadowRoot) {
      this.attachShadow({ mode: 'open' }).innerHTML =
        '<style>:host{display:inline-block;white-space:pre;flex:none}</style><slot></slot>';
    }
    this.fit();
  }
  fit() {
    const w = +this.getAttribute('w'), n = this.textContent.length;
    this.style.letterSpacing = '0';
    this.style.width = 'max-content';
    const natural = this.getBoundingClientRect().width;
    this.style.letterSpacing = ((w - natural) / n).toFixed(3) + 'px';
    this.style.width = w + 'px';
  }
});
const refit = r => r.querySelectorAll('*').forEach(e => {
  if (e.localName === 'fit-text') e.fit();
  if (e.shadowRoot) refit(e.shadowRoot);
});
refit(document);
</script>
</body>
</html>
